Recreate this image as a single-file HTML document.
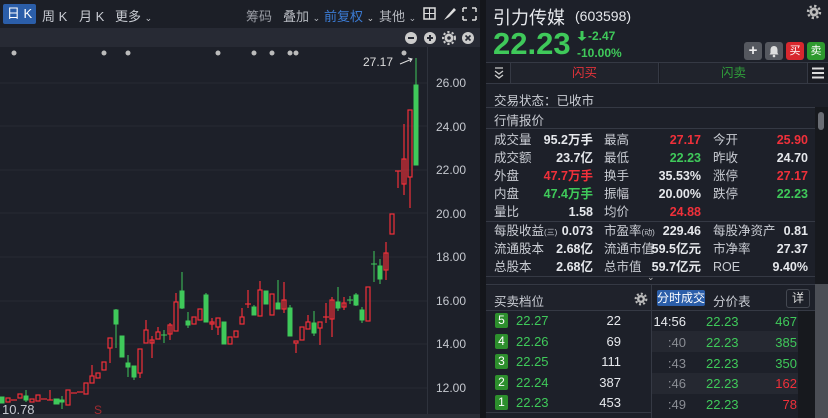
<!DOCTYPE html>
<html><head><meta charset="utf-8"><style>
*{margin:0;padding:0;box-sizing:border-box}
body{width:828px;height:418px;overflow:hidden;background:#15171d;font-family:"Liberation Sans","Noto Sans CJK SC",sans-serif;color:#d0d3da;position:relative}
.a{position:absolute;white-space:nowrap}
.r{color:#f0303a}.g{color:#3fc95a}.w{color:#e6e8ec}
.tb{font-size:13px;color:#c8cbd2}
.t{font-size:12.5px}
.lab{color:#c9ccd3}
.val{font-weight:bold;text-align:right}
</style></head><body>
<!-- left panel -->
<div class="a" style="left:0;top:0;width:480px;height:28px;background:#1c1f27"></div>
<div class="a" style="left:0;top:28px;width:480px;height:19px;background:#272a34"></div>
<div class="a" style="left:0;top:47px;width:480px;height:371px;background:#1d2029"></div>
<div class="a" style="left:3px;top:4px;width:33px;height:20px;background:#2b5ea9;border-radius:2px;color:#fff;font-size:13px;line-height:20px;text-align:center">日 K</div>
<div class="a tb" style="left:42px;top:6px">周 K</div>
<div class="a tb" style="left:79px;top:6px">月 K</div>
<div class="a tb" style="left:115px;top:6px">更多 <span style="font-size:9px">⌄</span></div>
<div class="a tb" style="left:246px;top:6px;color:#9a9da5">筹码</div>
<div class="a tb" style="left:283px;top:6px;color:#b5b8bf">叠加 <span style="font-size:9px">⌄</span></div>
<div class="a tb" style="left:324px;top:6px;color:#3b7bd4">前复权 <span style="font-size:9px;color:#ccc">⌄</span></div>
<div class="a tb" style="left:379px;top:6px;color:#b5b8bf">其他 <span style="font-size:9px">⌄</span></div>
<svg class="a" style="left:420px;top:6px" width="60" height="16">
<rect x="4" y="2" width="11" height="11" fill="none" stroke="#ddd" stroke-width="1.5"/><line x1="9.5" y1="2" x2="9.5" y2="13" stroke="#ddd"/><line x1="4" y1="7.5" x2="15" y2="7.5" stroke="#ddd"/>
<path d="M24 14 L27 10 L34 2 L36 4 L29 11 Z" fill="#ddd"/>
<path d="M43 2h4M43 2v4M56 2h-4M56 2v4M43 14h4M43 14v-4M56 14h-4M56 14v-4" stroke="#ddd" stroke-width="1.5"/>
</svg>
<svg class="a" style="left:403px;top:30px" width="77" height="16">
<circle cx="8" cy="8" r="6" fill="#ccc"/><rect x="5" y="7" width="6" height="2" fill="#272a34"/>
<circle cx="27" cy="8" r="6" fill="#ccc"/><rect x="24" y="7" width="6" height="2" fill="#272a34"/><rect x="26" y="5" width="2" height="6" fill="#272a34"/>
<circle cx="46" cy="8" r="4.5" fill="#ccc"/><circle cx="46" cy="8" r="6" fill="none" stroke="#ccc" stroke-width="2" stroke-dasharray="2.2 2.2"/><circle cx="46" cy="8" r="1.8" fill="#272a34"/>
<circle cx="65" cy="8" r="6" fill="#ccc"/><path d="M62.5 5.5l5 5M67.5 5.5l-5 5" stroke="#272a34" stroke-width="1.6"/>
</svg>
<svg class="a" style="left:0;top:0" width="480" height="418">
<g stroke="#262a33" stroke-width="1">
<line x1="0" y1="83" x2="427" y2="83"/><line x1="0" y1="126" x2="427" y2="126"/><line x1="0" y1="170" x2="427" y2="170"/><line x1="0" y1="213" x2="427" y2="213"/><line x1="0" y1="257" x2="427" y2="257"/><line x1="0" y1="301" x2="427" y2="301"/><line x1="0" y1="344" x2="427" y2="344"/><line x1="0" y1="388" x2="427" y2="388"/>
</g>
<line x1="427.5" y1="47" x2="427.5" y2="414" stroke="#2e323c"/>
<rect x="0" y="414" width="480" height="4" fill="#2a2d36"/>
<g fill="#bbb"><circle cx="14" cy="53" r="2.5"/><circle cx="104" cy="53" r="2.5"/><circle cx="128" cy="53" r="2.5"/><circle cx="218" cy="53" r="2.5"/><circle cx="254" cy="53" r="2.5"/><circle cx="272" cy="53" r="2.5"/><circle cx="290" cy="53" r="2.5"/><circle cx="296" cy="53" r="2.5"/><circle cx="404" cy="53" r="2.5"/></g>
<text x="363" y="66" font-size="12" fill="#ddd" font-family="Liberation Sans">27.17</text>
<path d="M400 64 L412 59 M408 58 L412 59 L410 62" stroke="#ddd" fill="none"/>
<g font-size="12" fill="#c5c8cf" font-family="Liberation Sans">
<text x="436" y="87">26.00</text><text x="436" y="131">24.00</text><text x="436" y="174">22.00</text><text x="436" y="218">20.00</text><text x="436" y="261">18.00</text><text x="436" y="305">16.00</text><text x="436" y="348">14.00</text><text x="436" y="392">12.00</text>
</g>
<text x="2" y="414" font-size="13" fill="#c5c8cf" font-family="Liberation Sans">10.78</text>
<text x="94" y="414" font-size="12" fill="#a02a30" font-family="Liberation Sans">S</text>
<g stroke="#f0303a" fill="none" stroke-width="1.2">
<rect x="6" y="398" width="4" height="4"/><line x1="11" y1="400" x2="17" y2="400"/><rect x="18" y="394" width="4" height="4"/><rect x="30" y="399" width="4" height="3"/><rect x="36" y="395" width="4" height="6"/><line x1="41" y1="399" x2="47" y2="399"/><line x1="47" y1="400" x2="53" y2="400"/><line x1="50" y1="390" x2="50" y2="400"/>
<rect x="66" y="390" width="4" height="15"/><line x1="71" y1="393" x2="77" y2="393"/><line x1="77" y1="392" x2="83" y2="392"/><rect x="84" y="383" width="4" height="11"/>
<rect x="90" y="376" width="4" height="7"/><line x1="92" y1="365" x2="92" y2="376"/><rect x="96" y="373" width="4" height="5"/><rect x="102" y="362" width="4" height="8"/>
<rect x="108" y="338" width="4" height="10"/><line x1="110" y1="348" x2="110" y2="363"/>
<rect x="138" y="349" width="4" height="24"/><line x1="140" y1="373" x2="140" y2="378"/>
<rect x="144" y="330" width="4" height="13"/><line x1="146" y1="320" x2="146" y2="330"/>
<rect x="150" y="340" width="4" height="3"/><line x1="152" y1="336" x2="152" y2="358"/>
<rect x="156" y="332" width="4" height="7"/><line x1="158" y1="327" x2="158" y2="332"/>
<rect x="168" y="325" width="4" height="9"/><line x1="170" y1="323" x2="170" y2="340"/>
<rect x="174" y="302" width="4" height="29"/><line x1="176" y1="293" x2="176" y2="302"/>
<rect x="192" y="317" width="4" height="7"/><rect x="198" y="309" width="4" height="11"/>
<rect x="210" y="322" width="4" height="2"/><line x1="212" y1="318" x2="212" y2="330"/>
<rect x="216" y="318" width="4" height="9"/><line x1="218" y1="327" x2="218" y2="335"/>
<rect x="228" y="337" width="4" height="7"/><rect x="234" y="331" width="4" height="6"/>
<rect x="240" y="317" width="4" height="7"/><line x1="242" y1="308" x2="242" y2="317"/>
<line x1="245" y1="304" x2="251" y2="304"/><line x1="248" y1="290" x2="248" y2="308"/>
<rect x="258" y="290" width="4" height="26"/><line x1="260" y1="281" x2="260" y2="290"/>
<rect x="270" y="294" width="4" height="21"/>
<rect x="282" y="300" width="4" height="9"/><line x1="284" y1="282" x2="284" y2="313"/>
<rect x="294" y="341" width="4" height="2"/><line x1="296" y1="343" x2="296" y2="353"/>
<rect x="300" y="327" width="4" height="13"/><rect x="306" y="322" width="4" height="7"/><line x1="308" y1="315" x2="308" y2="322"/>
<rect x="318" y="322" width="4" height="6"/><line x1="320" y1="328" x2="320" y2="345"/>
<line x1="323" y1="317" x2="329" y2="317"/><line x1="326" y1="303" x2="326" y2="323"/>
<rect x="330" y="300" width="4" height="19"/><line x1="332" y1="297" x2="332" y2="337"/>
<rect x="342" y="303" width="4" height="4"/><line x1="344" y1="297" x2="344" y2="310"/>
<rect x="366" y="287" width="4" height="34"/>
<rect x="384" y="253" width="4" height="17"/><line x1="386" y1="242" x2="386" y2="280"/>
<rect x="390" y="214" width="4" height="20"/>
<line x1="395" y1="171" x2="401" y2="171"/><line x1="398" y1="171" x2="398" y2="188"/>
<rect x="402" y="159" width="4" height="25"/><line x1="404" y1="124" x2="404" y2="195"/>
<rect x="408" y="110" width="4" height="67"/><line x1="410" y1="177" x2="410" y2="208"/>
</g>
<g fill="#3fc95a" stroke="#3fc95a" stroke-width="1">
<rect x="0" y="397" width="4" height="6"/><rect x="24" y="396" width="4" height="4"/><line x1="26" y1="390" x2="26" y2="402"/>
<rect x="54" y="399" width="5" height="5"/><rect x="60" y="400" width="4" height="2"/><line x1="62" y1="396" x2="62" y2="409"/>
<rect x="114" y="310" width="4" height="14"/><line x1="116" y1="309" x2="116" y2="348"/>
<rect x="120" y="336" width="4" height="21"/>
<rect x="126" y="363" width="4" height="4"/><line x1="128" y1="355" x2="128" y2="377"/>
<rect x="132" y="366" width="4" height="11"/><line x1="134" y1="377" x2="134" y2="380"/>
<line x1="161" y1="335" x2="167" y2="335"/><line x1="164" y1="330" x2="164" y2="343"/>
<rect x="180" y="291" width="4" height="17"/><line x1="182" y1="272" x2="182" y2="309"/>
<rect x="186" y="321" width="4" height="4"/><line x1="188" y1="312" x2="188" y2="328"/>
<rect x="204" y="295" width="4" height="27"/><line x1="206" y1="293" x2="206" y2="295"/>
<rect x="222" y="322" width="4" height="22"/>
<rect x="252" y="307" width="4" height="8"/><line x1="254" y1="305" x2="254" y2="307"/>
<rect x="264" y="291" width="4" height="13"/>
<rect x="276" y="303" width="4" height="6"/><line x1="278" y1="280" x2="278" y2="303"/>
<rect x="288" y="308" width="4" height="28"/><line x1="290" y1="305" x2="290" y2="308"/>
<rect x="312" y="323" width="4" height="10"/><line x1="314" y1="311" x2="314" y2="336"/>
<rect x="336" y="302" width="4" height="6"/><line x1="338" y1="287" x2="338" y2="311"/>
<line x1="347" y1="300" x2="353" y2="300"/><line x1="350" y1="296" x2="350" y2="304"/>
<rect x="354" y="295" width="4" height="10"/><line x1="356" y1="293" x2="356" y2="306"/>
<rect x="360" y="310" width="4" height="10"/><line x1="362" y1="307" x2="362" y2="323"/>
<line x1="371" y1="264" x2="377" y2="264"/><line x1="374" y1="251" x2="374" y2="282"/>
<rect x="378" y="266" width="4" height="13"/><line x1="380" y1="259" x2="380" y2="284"/>
<rect x="414" y="85" width="4" height="80"/><line x1="416" y1="58" x2="416" y2="85"/>
</g>
</svg>
<!-- right panel -->
<div class="a" style="left:486px;top:0;width:342px;height:418px;background:#1d2029"></div>
<div class="a" style="left:480px;top:0;width:6px;height:418px;background:#14161b"></div>
<div class="a w" style="left:493px;top:4px;font-size:18px">引力传媒</div>
<div class="a w" style="left:575px;top:8px;font-size:14px">(603598)</div>
<svg class="a" style="left:806px;top:4px" width="16" height="16"><circle cx="8" cy="8" r="4.5" fill="#bbb"/><circle cx="8" cy="8" r="6" fill="none" stroke="#bbb" stroke-width="2.4" stroke-dasharray="2.3 2.4"/><circle cx="8" cy="8" r="1.8" fill="#1d2029"/></svg>
<div class="a g" style="left:493px;top:26px;font-size:31px;font-weight:bold">22.23</div>
<svg class="a" style="left:577px;top:30px" width="10" height="12"><path d="M3.5 1h3v6h3L5 11 0.5 7h3z" fill="#3fc95a"/></svg>
<div class="a g" style="left:588px;top:29px;font-size:12px;font-weight:bold">-2.47</div>
<div class="a g" style="left:577px;top:46px;font-size:12px;font-weight:bold">-10.00%</div>
<div class="a" style="left:744px;top:42px;width:18px;height:18px;background:#55585f;border-radius:3px;color:#eee;font-weight:bold;font-size:15px;line-height:18px;text-align:center">+</div>
<div class="a" style="left:765px;top:42px;width:18px;height:18px;background:#55585f;border-radius:3px"></div>
<svg class="a" style="left:765px;top:42px" width="18" height="18"><path d="M9 4c-2.3 0-3.5 1.8-3.5 4v3L4.5 12.5h9L12.5 11V8c0-2.2-1.2-4-3.5-4z" fill="#ddd"/><circle cx="9" cy="14" r="1.3" fill="#ddd"/></svg>
<div class="a" style="left:786px;top:42px;width:18px;height:18px;background:#d8282e;border-radius:3px;color:#fff;font-size:11px;line-height:18px;text-align:center">买</div>
<div class="a" style="left:807px;top:42px;width:18px;height:18px;background:#2e9a2e;border-radius:3px;color:#fff;font-size:11px;line-height:18px;text-align:center">卖</div>
<div class="a" style="left:486px;top:62px;width:342px;height:22px;border-top:1px solid #353944;border-bottom:1px solid #353944;background:#1a1c23"></div>
<div class="a" style="left:510px;top:63px;width:149px;height:20px;background:#20232c;border-left:1px solid #353944;border-right:1px solid #353944;color:#e0333a;font-size:12.5px;line-height:20px;text-align:center">闪买</div>
<div class="a" style="left:660px;top:63px;width:148px;height:20px;background:#20232c;border-right:1px solid #353944;color:#2f9c3a;font-size:12.5px;line-height:20px;text-align:center">闪卖</div>
<svg class="a" style="left:494px;top:67px" width="10" height="12"><path d="M1 1h8M1 4l4 3 4-3M1 8l4 3 4-3" stroke="#ccc" fill="none" stroke-width="1.3"/></svg>
<svg class="a" style="left:811px;top:66px" width="14" height="14"><path d="M1 2.5h12M1 7h12M1 11.5h12" stroke="#ddd" stroke-width="2"/></svg>
<div class="a t lab" style="left:494px;top:90px">交易状态：已收市</div>
<div class="a" style="left:486px;top:107px;width:329px;height:1px;background:#353944"></div>
<div class="a t lab" style="left:494px;top:110px">行情报价</div>
<div class="a" style="left:486px;top:128px;width:329px;height:1px;background:#353944"></div>
<div class="a" style="left:815px;top:107px;width:13px;height:311px;background:#17191e"></div>
<div class="a" style="left:818px;top:112px;width:6px;height:18px;background:#6a6d74;border-radius:3px"></div>
<div class="a" style="left:815px;top:284px;width:13px;height:134px;background:#4b4e55"></div>
<div class="a t" style="left:494px;top:131px;width:321px;line-height:18px">
<div style="position:relative;height:18px"><span class="a lab" style="left:0">成交量</span><span class="a val w" style="right:222px">95.2万手</span><span class="a lab" style="left:110px">最高</span><span class="a val r" style="right:114px">27.17</span><span class="a lab" style="left:219px">今开</span><span class="a val r" style="right:7px">25.90</span></div>
<div style="position:relative;height:18px"><span class="a lab" style="left:0">成交额</span><span class="a val w" style="right:222px">23.7亿</span><span class="a lab" style="left:110px">最低</span><span class="a val g" style="right:114px">22.23</span><span class="a lab" style="left:219px">昨收</span><span class="a val w" style="right:7px">24.70</span></div>
<div style="position:relative;height:18px"><span class="a lab" style="left:0">外盘</span><span class="a val r" style="right:222px">47.7万手</span><span class="a lab" style="left:110px">换手</span><span class="a val w" style="right:114px">35.53%</span><span class="a lab" style="left:219px">涨停</span><span class="a val r" style="right:7px">27.17</span></div>
<div style="position:relative;height:18px"><span class="a lab" style="left:0">内盘</span><span class="a val g" style="right:222px">47.4万手</span><span class="a lab" style="left:110px">振幅</span><span class="a val w" style="right:114px">20.00%</span><span class="a lab" style="left:219px">跌停</span><span class="a val g" style="right:7px">22.23</span></div>
<div style="position:relative;height:18px"><span class="a lab" style="left:0">量比</span><span class="a val w" style="right:222px">1.58</span><span class="a lab" style="left:110px">均价</span><span class="a val r" style="right:114px">24.88</span></div>
</div>
<div class="a" style="left:486px;top:221px;width:329px;height:1px;background:#353944"></div>
<div class="a t" style="left:494px;top:222px;width:321px;line-height:18px">
<div style="position:relative;height:18px"><span class="a lab" style="left:0">每股收益<small style="font-size:8px">(三)</small></span><span class="a val w" style="right:222px">0.073</span><span class="a lab" style="left:110px">市盈率<small style="font-size:8px">(动)</small></span><span class="a val w" style="right:114px">229.46</span><span class="a lab" style="left:219px">每股净资产</span><span class="a val w" style="right:7px">0.81</span></div>
<div style="position:relative;height:18px"><span class="a lab" style="left:0">流通股本</span><span class="a val w" style="right:222px">2.68亿</span><span class="a lab" style="left:110px">流通市值</span><span class="a val w" style="right:114px">59.5亿元</span><span class="a lab" style="left:219px">市净率</span><span class="a val w" style="right:7px">27.37</span></div>
<div style="position:relative;height:18px"><span class="a lab" style="left:0">总股本</span><span class="a val w" style="right:222px">2.68亿</span><span class="a lab" style="left:110px">总市值</span><span class="a val w" style="right:114px">59.7亿元</span><span class="a lab" style="left:219px">ROE</span><span class="a val w" style="right:7px">9.40%</span></div>
</div>
<div class="a" style="left:486px;top:276px;width:329px;height:1px;background:#353944"></div>
<div class="a" style="left:647px;top:272px;color:#bbb;font-size:9px">⌄</div>
<div class="a" style="left:486px;top:284px;width:329px;height:1px;background:#353944"></div>
<div class="a" style="left:486px;top:286px;width:165px;height:24px;background:#1f222b"></div>
<div class="a t lab" style="left:494px;top:291px">买卖档位</div>
<svg class="a" style="left:634px;top:292px" width="14" height="14"><circle cx="7" cy="7" r="4" fill="#bbb"/><circle cx="7" cy="7" r="5.3" fill="none" stroke="#bbb" stroke-width="2.2" stroke-dasharray="2 2.1"/><circle cx="7" cy="7" r="1.6" fill="#1f222b"/></svg>
<div class="a" style="left:651px;top:284px;width:1px;height:134px;background:#353944"></div>
<div class="a" style="left:486px;top:310px;width:329px;height:1px;background:#353944"></div>
<div class="a" style="left:657px;top:290px;width:48px;height:16px;background:#2b5ea9;border-radius:2px;color:#fff;font-size:12px;line-height:16px;text-align:center">分时成交</div>
<div class="a t lab" style="left:713px;top:291px">分价表</div>
<div class="a" style="left:786px;top:289px;width:24px;height:19px;border:1px solid #444851;border-radius:3px;color:#ddd;font-size:12px;line-height:17px;text-align:center">详</div>
<div class="a" style="left:652px;top:311px;width:146px;height:107px;background:#1d2029"></div>
<div class="a" style="left:652px;top:331px;width:146px;height:21px;background:#252831"></div>
<div class="a" style="left:652px;top:373px;width:146px;height:21px;background:#252831"></div>
<div class="a" style="left:798px;top:311px;width:17px;height:107px;background:#17191e"></div>
<div class="a" style="left:486px;top:412px;width:165px;height:1px;background:#353944"></div>
<div class="a" style="left:486px;top:311px;width:165px;font-size:13px">
<div style="position:relative;height:20.6px"><span class="a" style="left:9px;top:2px;width:13px;height:15px;background:#2d8f2d;color:#fff;font-size:12px;text-align:center;line-height:15px;border-radius:2px">5</span><span class="a g" style="left:30px;top:2px">22.27</span><span class="a w" style="right:30px;top:2px">22</span></div>
<div style="position:relative;height:20.6px"><span class="a" style="left:9px;top:2px;width:13px;height:15px;background:#2d8f2d;color:#fff;font-size:12px;text-align:center;line-height:15px;border-radius:2px">4</span><span class="a g" style="left:30px;top:2px">22.26</span><span class="a w" style="right:30px;top:2px">69</span></div>
<div style="position:relative;height:20.6px"><span class="a" style="left:9px;top:2px;width:13px;height:15px;background:#2d8f2d;color:#fff;font-size:12px;text-align:center;line-height:15px;border-radius:2px">3</span><span class="a g" style="left:30px;top:2px">22.25</span><span class="a w" style="right:30px;top:2px">111</span></div>
<div style="position:relative;height:20.6px"><span class="a" style="left:9px;top:2px;width:13px;height:15px;background:#2d8f2d;color:#fff;font-size:12px;text-align:center;line-height:15px;border-radius:2px">2</span><span class="a g" style="left:30px;top:2px">22.24</span><span class="a w" style="right:30px;top:2px">387</span></div>
<div style="position:relative;height:20.6px"><span class="a" style="left:9px;top:2px;width:13px;height:15px;background:#2d8f2d;color:#fff;font-size:12px;text-align:center;line-height:15px;border-radius:2px">1</span><span class="a g" style="left:30px;top:2px">22.23</span><span class="a w" style="right:30px;top:2px">453</span></div>
</div>
<div class="a" style="left:652px;top:311px;width:146px;font-size:13px">
<div style="position:relative;height:20.8px"><span class="a w" style="right:112px;top:3px">14:56</span><span class="a g" style="left:54px;top:3px">22.23</span><span class="a g" style="right:1px;top:3px">467</span></div>
<div style="position:relative;height:20.8px"><span class="a" style="right:112px;top:3px;color:#8a8d94">:40</span><span class="a g" style="left:54px;top:3px">22.23</span><span class="a g" style="right:1px;top:3px">385</span></div>
<div style="position:relative;height:20.8px"><span class="a" style="right:112px;top:3px;color:#8a8d94">:43</span><span class="a g" style="left:54px;top:3px">22.23</span><span class="a g" style="right:1px;top:3px">350</span></div>
<div style="position:relative;height:20.8px"><span class="a" style="right:112px;top:3px;color:#8a8d94">:46</span><span class="a g" style="left:54px;top:3px">22.23</span><span class="a r" style="right:1px;top:3px">162</span></div>
<div style="position:relative;height:20.8px"><span class="a" style="right:112px;top:3px;color:#8a8d94">:49</span><span class="a g" style="left:54px;top:3px">22.23</span><span class="a r" style="right:1px;top:3px">78</span></div>
</div>
</body></html>
